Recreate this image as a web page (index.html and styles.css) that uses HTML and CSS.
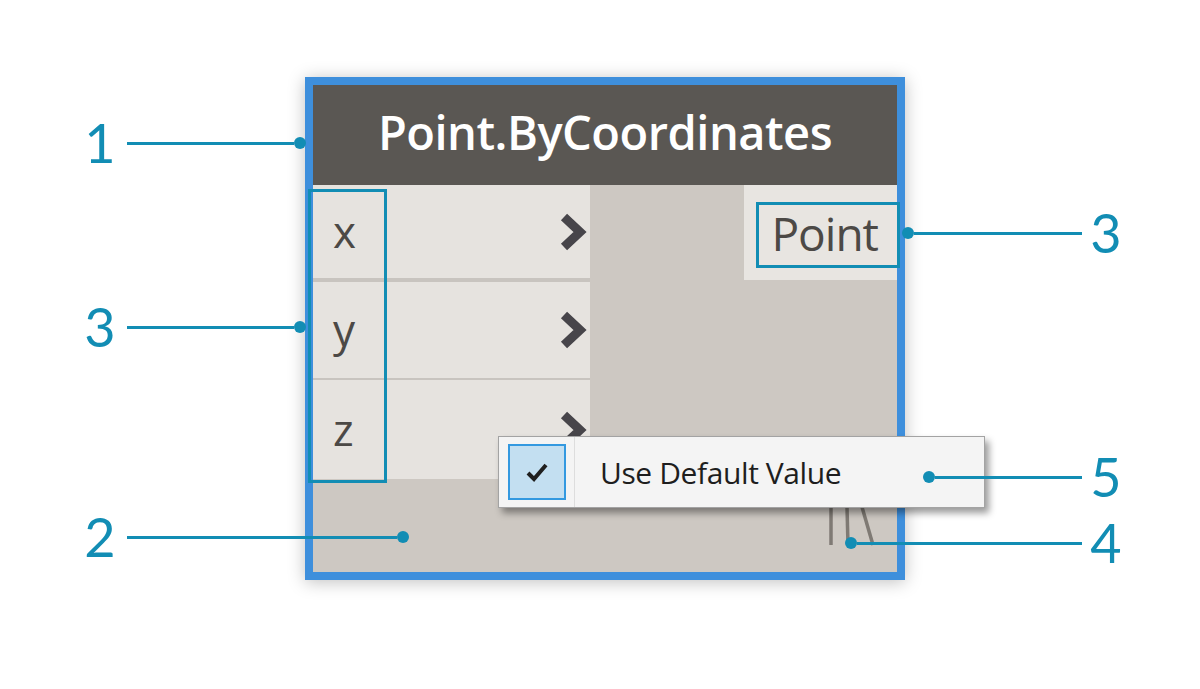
FILE: index.html
```html
<!DOCTYPE html>
<html lang="en">
<head>
    <meta charset="UTF-8">
    <meta name="viewport" content="width=device-width, initial-scale=1.0">
    <title>Point.ByCoordinates</title>
    <link rel="stylesheet" href="styles.css">
</head>
<body>
    <div class="stage">
        <div class="node">
            <div class="node-header">Point.ByCoordinates</div>
            <div class="node-body">
                <div class="inputs">
                    <div class="port port-x">
                        <span class="port-name">x</span>
                        <svg class="chevron" width="30" height="42" viewBox="0 0 30 42"><polyline points="7,6 23,21 7,36" /></svg>
                    </div>
                    <div class="port port-y">
                        <span class="port-name">y</span>
                        <svg class="chevron" width="30" height="42" viewBox="0 0 30 42"><polyline points="7,6 23,21 7,36" /></svg>
                    </div>
                    <div class="port port-z">
                        <span class="port-name">z</span>
                        <svg class="chevron" width="30" height="42" viewBox="0 0 30 42"><polyline points="7,6 23,21 7,36" /></svg>
                    </div>
                </div>
                <div class="outputs">
                    <div class="port-out">Point</div>
                </div>
            </div>
            <div class="node-footer">
                <svg class="lacing" width="50" height="42" viewBox="0 0 50 42">
                    <line x1="4" y1="2" x2="4" y2="40" />
                    <line x1="20" y1="2" x2="21" y2="40" />
                    <line x1="35" y1="2" x2="46" y2="40" />
                </svg>
            </div>
        </div>

        <div class="mark mark-inputs"></div>
        <div class="mark mark-output"></div>

        <div class="context-menu">
            <div class="menu-check">
                <div class="check-box">
                    <svg width="28" height="26" viewBox="0 0 28 26"><polyline points="5,14 11,20 23,6" /></svg>
                </div>
            </div>
            <div class="menu-label">Use Default Value</div>
        </div>

        <div class="callout left c1"><span class="num">1</span><span class="line"></span><span class="dot"></span></div>
        <div class="callout left c3l"><span class="num">3</span><span class="line"></span><span class="dot"></span></div>
        <div class="callout left c2"><span class="num">2</span><span class="line"></span><span class="dot"></span></div>
        <div class="callout right c3r"><span class="dot"></span><span class="line"></span><span class="num">3</span></div>
        <div class="callout right c5"><span class="dot"></span><span class="line"></span><span class="num">5</span></div>
        <div class="callout right c4"><span class="dot"></span><span class="line"></span><span class="num">4</span></div>
    </div>
</body>
</html>
```

FILE: styles.css
```css
body {
    margin: 0;
    background: #ffffff;
    font-family: "Open Sans", "Noto Sans", sans-serif;
}
.stage {
    position: relative;
    width: 1200px;
    height: 689px;
    overflow: hidden;
}

/* node */
.node {
    position: absolute;
    left: 305px;
    top: 77px;
    width: 584px;
    border: 8px solid #3e8fdc;
    background: #cdc8c2;
    box-shadow: 0 2px 16px rgba(0, 0, 0, 0.25);
}
.node-header {
    height: 100px;
    box-sizing: border-box;
    padding-bottom: 7px;
    background: #5a5753;
    color: #ffffff;
    font-size: 47px;
    font-weight: 600;
    letter-spacing: -0.5px;
    display: flex;
    align-items: center;
    justify-content: center;
}
.node-body {
    display: flex;
    justify-content: space-between;
    align-items: flex-start;
}
.inputs {
    width: 277px;
    background: #e6e3df;
}
.port {
    display: flex;
    align-items: center;
    justify-content: space-between;
    padding: 0 3px 0 20px;
}
.port-x {
    height: 93px;
    border-bottom: 4px solid #c8c4bf;
}
.port-y {
    height: 96px;
    border-bottom: 2px solid #c8c4bf;
}
.port-z {
    height: 99px;
}
.port-name {
    font-size: 44px;
    color: #4c4946;
    line-height: 1;
    margin-top: -2px;
}
.chevron polyline {
    fill: none;
    stroke: #47454a;
    stroke-width: 9;
    stroke-linejoin: miter;
}
.outputs {
    width: 153px;
}
.port-out {
    height: 95px;
    background: #e8e5e1;
    display: flex;
    align-items: center;
    justify-content: flex-end;
    padding-right: 19px;
    font-size: 46px;
    color: #4c4946;
    letter-spacing: -1px;
}
.node-footer {
    height: 93px;
    display: flex;
    justify-content: flex-end;
    align-items: center;
    padding-right: 20px;
}
.lacing line {
    stroke: #7f7a74;
    stroke-width: 3.5;
}

/* highlight boxes */
.mark {
    position: absolute;
    border: 3px solid #128db4;
}
.mark-inputs {
    left: 308px;
    top: 189px;
    width: 73px;
    height: 288px;
}
.mark-output {
    left: 756px;
    top: 202px;
    width: 138px;
    height: 60px;
}

/* context menu */
.context-menu {
    position: absolute;
    left: 498px;
    top: 436px;
    width: 485px;
    height: 70px;
    border: 1px solid #a3a3a3;
    background: #f4f4f4;
    box-shadow: 4px 5px 7px rgba(0, 0, 0, 0.4);
    display: flex;
}
.menu-check {
    width: 76px;
    border-right: 1px solid #dddddd;
    display: flex;
    align-items: center;
    padding-left: 9px;
    box-sizing: border-box;
}
.check-box {
    width: 54px;
    height: 52px;
    background: #c3dff1;
    border: 2px solid #3399e0;
    display: flex;
    align-items: center;
    justify-content: center;
}
.check-box polyline {
    fill: none;
    stroke: #1f1f1f;
    stroke-width: 4;
}
.menu-label {
    display: flex;
    align-items: center;
    padding-left: 25px;
    font-size: 30px;
    color: #1e1e1e;
    letter-spacing: -0.4px;
}

/* callouts */
.callout {
    position: absolute;
    display: flex;
    align-items: center;
    height: 60px;
    font-family: Lato, "Noto Sans", sans-serif;
    color: #128db4;
}
.callout .num {
    width: 40px;
    text-align: center;
    font-size: 54px;
    line-height: 60px;
}
.callout .line {
    height: 3px;
    background: #128db4;
}
.callout .dot {
    width: 12px;
    height: 12px;
    border-radius: 50%;
    background: #128db4;
}
.callout.left {
    left: 80px;
}
.callout.left .num {
    margin-right: 7px;
}
.callout.right .num {
    margin-left: 4px;
}
.c1 { top: 113px; }
.c1 .line, .c3l .line { width: 167px; }
.c3l { top: 297px; }
.c2 { top: 507px; }
.c2 .line { width: 270px; }
.c3r { top: 203px; left: 902px; }
.c3r .line { width: 168px; }
.c5 { top: 447px; left: 923px; }
.c5 .line { width: 147px; }
.c4 { top: 513px; left: 845px; }
.c4 .line { width: 225px; }
```
